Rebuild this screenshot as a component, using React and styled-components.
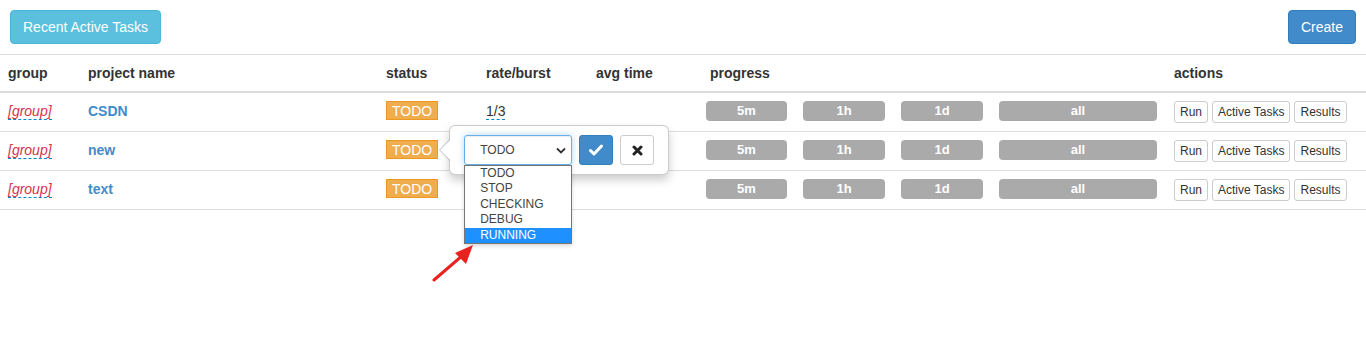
import React from "react";
import styled, { createGlobalStyle } from "styled-components";

const GlobalStyle = createGlobalStyle`
  body {
    margin: 0;
    font-family: "Liberation Sans", Arial, sans-serif;
    font-size: 14px;
    line-height: 20px;
    color: #333;
    background: #fff;
  }
`;

// rate of the 2nd and 3rd rows sits under the open editor, so it is not shown
const projects = [
  { name: "CSDN", rate: "1/3" },
  { name: "new", rate: null, editing: true },
  { name: "text", rate: null },
];

const statusOptions = ["TODO", "STOP", "CHECKING", "DEBUG", "RUNNING"];

function App() {
  return (
    <Page>
      <GlobalStyle />
      <TopBar>
        <Btn $kind="info">Recent Active Tasks</Btn>
        <Btn $kind="primary">Create</Btn>
      </TopBar>
      <Table>
        <colgroup>
          <col style={{ width: 80 }} />
          <col style={{ width: 298 }} />
          <col style={{ width: 100 }} />
          <col style={{ width: 110 }} />
          <col style={{ width: 114 }} />
          <col style={{ width: 464 }} />
          <col style={{ width: 200 }} />
        </colgroup>
        <thead>
          <tr>
            <Th>group</Th>
            <Th>project name</Th>
            <Th>status</Th>
            <Th>rate/burst</Th>
            <Th>avg time</Th>
            <Th>progress</Th>
            <Th>actions</Th>
          </tr>
        </thead>
        <tbody>
          {projects.map((p) => (
            <Row key={p.name} $raised={p.editing}>
              <Td>
                <Group>[group]</Group>
              </Td>
              <Td>
                <ProjectName>{p.name}</ProjectName>
              </Td>
              <Td>
                <StatusWrap>
                  <Status>TODO</Status>
                  {p.editing && <StatusEditor />}
                </StatusWrap>
              </Td>
              <Td>{p.rate && <Editable>{p.rate}</Editable>}</Td>
              <Td />
              <ProgressCell>
                <Bars>
                  <Bar>5m</Bar>
                  <Bar>1h</Bar>
                  <Bar>1d</Bar>
                  <Bar>all</Bar>
                </Bars>
              </ProgressCell>
              <Td>
                <Actions>
                  <SmallBtn>Run</SmallBtn>
                  <SmallBtn>Active Tasks</SmallBtn>
                  <SmallBtn>Results</SmallBtn>
                </Actions>
              </Td>
            </Row>
          ))}
        </tbody>
      </Table>
      <PointerArrow width="50" height="46" viewBox="0 0 50 46">
        <line x1="6" y1="39" x2="35" y2="14" stroke="#e8221f" strokeWidth="3" strokeLinecap="round" />
        <polygon points="45,4 27,12 38,23" fill="#e8221f" />
      </PointerArrow>
    </Page>
  );
}

function StatusEditor() {
  return (
    <Popover>
      <PopArrow />
      <FakeSelect>
        TODO
        <svg width="10" height="7" viewBox="0 0 10 7">
          <path d="M1 1.5 L5 5.5 L9 1.5" fill="none" stroke="#333" strokeWidth="1.8" />
        </svg>
        <OptionList>
          {statusOptions.map((o) => (
            <Option key={o} $active={o === "RUNNING"}>
              {o}
            </Option>
          ))}
        </OptionList>
      </FakeSelect>
      <IconBtn $primary>
        <svg width="14" height="12" viewBox="0 0 14 12">
          <path d="M1.5 6.5 L5 10 L12.5 2" fill="none" stroke="#fff" strokeWidth="3" strokeLinecap="round" strokeLinejoin="round" />
        </svg>
      </IconBtn>
      <IconBtn>
        <svg width="11" height="11" viewBox="0 0 11 11">
          <path d="M2 2 L9 9 M9 2 L2 9" fill="none" stroke="#222" strokeWidth="3" strokeLinecap="round" />
        </svg>
      </IconBtn>
    </Popover>
  );
}

const Page = styled.div`
  position: relative;
  width: 1366px;
  min-height: 100vh;
`;

const TopBar = styled.div`
  display: flex;
  justify-content: space-between;
  align-items: center;
  padding: 10px;
  border-bottom: 1px solid #ddd;
`;

const Btn = styled.button`
  font-family: inherit;
  font-size: 14px;
  line-height: 20px;
  padding: 6px 12px;
  border-radius: 4px;
  color: #fff;
  cursor: pointer;
  background: ${(p) => (p.$kind === "info" ? "#5bc0de" : "#428bca")};
  border: 1px solid ${(p) => (p.$kind === "info" ? "#46b8da" : "#357ebd")};
`;

const Table = styled.table`
  width: 1366px;
  table-layout: fixed;
  border-collapse: collapse;
  border-spacing: 0;
`;

const Row = styled.tr`
  position: relative;
  z-index: ${(p) => (p.$raised ? 5 : "auto")};
`;

const Th = styled.th`
  text-align: left;
  font-weight: bold;
  padding: 8px;
  border-bottom: 2px solid #ddd;
  white-space: nowrap;
`;

const Td = styled.td`
  padding: 8px;
  vertical-align: top;
  border-top: 1px solid #ddd;
  border-bottom: 1px solid #ddd;
  white-space: nowrap;
`;

const ProgressCell = styled(Td)`
  padding: 8px 4px;
`;

const Group = styled.span`
  font-style: italic;
  color: #d6344c;
  border-bottom: 1px dashed #0088cc;
`;

const ProjectName = styled.span`
  font-weight: bold;
  color: #428bca;
`;

const Editable = styled.span`
  border-bottom: 1px dashed #0088cc;
`;

const StatusWrap = styled.span`
  position: relative;
`;

const Status = styled.span`
  padding: 1px 5px 0 5px;
  border: 1px solid #ec971f;
  background: #f0ad4e;
  color: #fff;
`;

const Bars = styled.div`
  display: grid;
  grid-template-columns: 81px 82px 82px 158px;
  column-gap: 16px;
`;

const Bar = styled.div`
  height: 20px;
  line-height: 20px;
  border-radius: 4px;
  background: #aaa;
  color: #fff;
  font-size: 13px;
  font-weight: bold;
  text-align: center;
`;

const Actions = styled.div`
  display: flex;
  gap: 4px;
`;

const SmallBtn = styled.button`
  font-family: inherit;
  font-size: 12px;
  line-height: 18px;
  padding: 1px 5px;
  border: 1px solid #ccc;
  border-radius: 3px;
  background: #fff;
  color: #333;
  cursor: pointer;
`;

const Popover = styled.div`
  position: absolute;
  left: calc(100% + 11px);
  top: 50%;
  transform: translateY(-50%);
  display: flex;
  align-items: center;
  gap: 7px;
  padding: 9px 14px;
  background: #fff;
  border: 1px solid rgba(0, 0, 0, 0.2);
  border-radius: 6px;
  box-shadow: 0 5px 10px rgba(0, 0, 0, 0.2);
  z-index: 5;
`;

const PopArrow = styled.div`
  position: absolute;
  left: -11px;
  top: 50%;
  margin-top: -11px;
  width: 0;
  height: 0;
  border-style: solid;
  border-width: 11px 11px 11px 0;
  border-color: transparent rgba(0, 0, 0, 0.25) transparent transparent;

  &::after {
    content: "";
    position: absolute;
    left: 1px;
    top: -10px;
    border-style: solid;
    border-width: 10px 10px 10px 0;
    border-color: transparent #fff transparent transparent;
  }
`;

const FakeSelect = styled.div`
  position: relative;
  box-sizing: border-box;
  width: 108px;
  height: 30px;
  display: flex;
  align-items: center;
  justify-content: space-between;
  padding: 0 5px 0 15px;
  font-size: 12px;
  color: #444;
  border: 1px solid #66afe9;
  border-radius: 3px;
  box-shadow: inset 0 1px 1px rgba(0, 0, 0, 0.075), 0 0 6px rgba(102, 175, 233, 0.5);
`;

const OptionList = styled.div`
  position: absolute;
  left: -1px;
  top: 29px;
  width: 106px;
  border: 1px solid #767676;
  background: #fff;
  box-shadow: 0 2px 4px rgba(0, 0, 0, 0.15);
  z-index: 10;
`;

const Option = styled.div`
  height: 15.4px;
  line-height: 15.4px;
  padding-left: 15px;
  font-size: 12px;
  color: ${(p) => (p.$active ? "#fff" : "#444")};
  background: ${(p) => (p.$active ? "#1e90ff" : "#fff")};
`;

const IconBtn = styled.button`
  box-sizing: border-box;
  width: 34px;
  height: 30px;
  display: flex;
  align-items: center;
  justify-content: center;
  padding: 0;
  border-radius: 3px;
  cursor: pointer;
  background: ${(p) => (p.$primary ? "#428bca" : "#fff")};
  border: 1px solid ${(p) => (p.$primary ? "#357ebd" : "#ccc")};
`;

const PointerArrow = styled.svg`
  position: absolute;
  left: 428px;
  top: 241px;
  z-index: 6;
`;

export default App;
